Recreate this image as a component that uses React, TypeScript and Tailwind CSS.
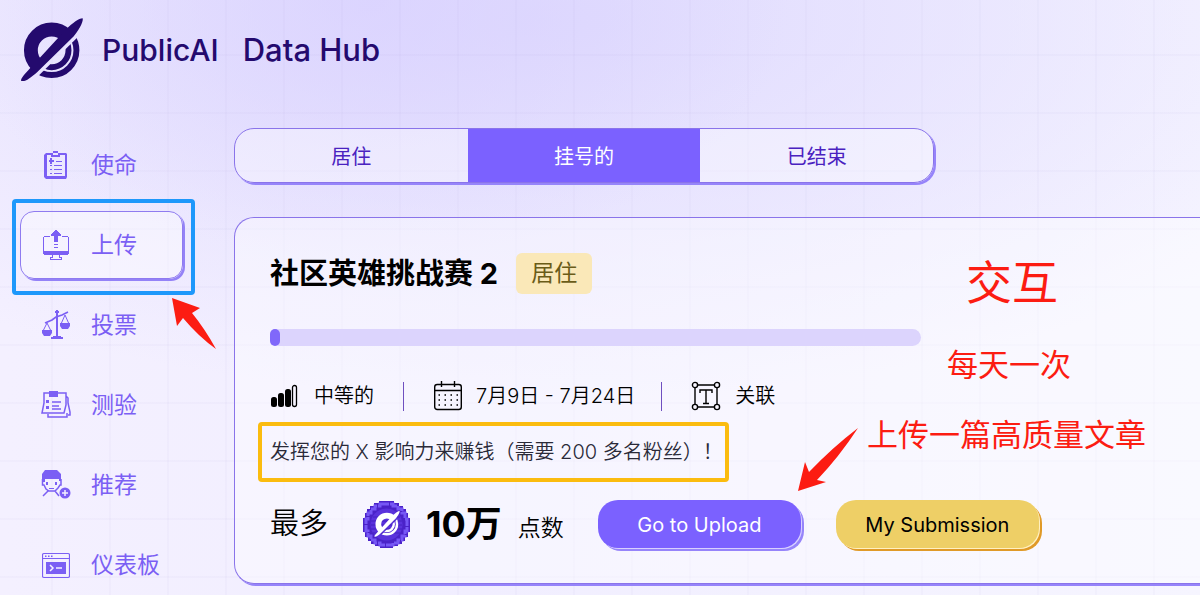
import { useState } from "react";
import type { ReactNode } from "react";

function LogoMark({ className }: { className?: string }) {
  return (
    <svg viewBox="14 8 192 200" className={className} aria-hidden="true">
      <defs>
        <clipPath id="mark-upper">
          <path d="M0 0H206L14 204H0Z" />
        </clipPath>
        <clipPath id="mark-lower">
          <path d="M50 205L196 61L216 61V216H50Z" />
        </clipPath>
      </defs>
      <g fill="none" stroke="currentColor">
        <circle cx="109" cy="109" r="63" strokeWidth="42" clipPath="url(#mark-upper)" />
        <g clipPath="url(#mark-lower)">
          <circle cx="109" cy="109" r="75" strokeWidth="18" />
          <circle cx="109" cy="109" r="51" strokeWidth="18" />
        </g>
      </g>
      <path
        fill="currentColor"
        d="M203 12C191 12 174 25 152 46L60 146C42 166 16 190 16 201C28 206 44 193 64 176L176 66C188 52 206 24 203 12Z"
      />
    </svg>
  );
}

function MissionIcon() {
  return (
    <svg viewBox="0 0 28 30" className="h-[30px] w-7" fill="currentColor">
      <path
        fillRule="evenodd"
        d="M4 3H9V5H5V26H23V5H18V3H24L25 4V27L24 29H4L2 27V5ZM9 3H11V1H16V3H18V7H9ZM11 3V5H16V3Z"
      />
      <path d="M7 10H8V8H10V10H12V12H10V14H8V12H7ZM14 11H20V12H14ZM12 15H20V16H12ZM12 19H20V20H12ZM12 23H20V24H12ZM8 15H10V16H8ZM8 19H10V20H8ZM8 23H10V24H8Z" />
    </svg>
  );
}

function UploadIcon() {
  return (
    <svg viewBox="0 0 28 30" className="h-[30px] w-7" fill="currentColor">
      <path d="M13 0H15V1H16V2H17V3H18V4H19V6H16V12H12V6H9V4H10V3H11V2H12V1H13ZM12 14H16V15H12ZM12 17H16V18H12Z" />
      <path d="M2 6H8V7H2V21H26V7H20V6H26V7H27V24H26V25H2V24H1V7H2ZM10 25H11V28H9V29H19V28H17V25H18V27H20V30H8V27H10Z" />
    </svg>
  );
}

function VoteIcon() {
  return (
    <svg viewBox="0 0 28 30" className="h-[30px] w-7" fill="currentColor">
      <path d="M14 0H16V1H17V3H16V26H19V27H21V29H9V27H11V26H14V3H13V1H14Z" />
      <g fill="none" stroke="currentColor">
        <path strokeWidth="1.600" d="M3 13L10 10L14 7L20 5L26 2" />
        <path d="M5 13L1 21M5 13L9 21M23 5L19 14M23 5L27 14" />
      </g>
      <path d="M0 20H10V23L8 26H2L0 23ZM18 13H28V16L26 19H20L18 16Z" />
    </svg>
  );
}

function QuizIcon() {
  return (
    <svg viewBox="0 0 30 30" className="h-[30px] w-[30px]" fill="currentColor">
      <path d="M8 1H17V7H8Z" />
      <g fill="none" stroke="currentColor" strokeWidth="1.500">
        <path d="M8 3H3V13L1 23H23L25 15V3H17M25 6L27 8V13L29 22V25H27M7 24V27H26V23" />
        <path d="M11 12H20M11 16H18M11 19H20" />
      </g>
      <path d="M5 10H8V13H5ZM5 16H8V19H5Z" />
    </svg>
  );
}

function ReferIcon() {
  return (
    <svg viewBox="0 0 30 30" className="h-[30px] w-[30px]" fill="currentColor">
      <path d="M4 0H16L20 4V11H18V9H4V12H1V4Z" />
      <g fill="none" stroke="currentColor" strokeWidth="1.500">
        <path d="M1.500 9V15H3L5 19L8 21H14L17 18L19 15H20V9M7 21L2 26M14 21L18 26" />
      </g>
      <path d="M5 12H7V15H5ZM14 12H16V15H14ZM8 18H13V19H8Z" />
      <circle cx="24" cy="23" r="5.500" />
      <path d="M24 20V26M21 23H27" stroke="#f4f1ff" strokeWidth="1.500" />
    </svg>
  );
}

function DashboardIcon() {
  return (
    <svg viewBox="0 0 28 30" className="h-[30px] w-7" fill="currentColor">
      <rect x="0.500" y="3.500" width="27" height="24" rx="1.500" fill="none" stroke="currentColor" strokeWidth="1.200" />
      <path d="M1 8H27V9H1ZM3 5.500H4.500V7H3ZM6 5.500H7.500V7H6ZM9 5.500H10.500V7H9ZM4 12H24V24H4Z" />
      <path d="M8 15L11 18L8 21M14 18H20" fill="none" stroke="#f4f1ff" strokeWidth="1.500" />
    </svg>
  );
}

function LevelIcon() {
  return (
    <svg viewBox="0 0 28 24" className="h-6 w-7">
      <rect x="1" y="13" width="6" height="10" rx="2.500" />
      <rect x="8" y="9" width="6" height="14" rx="2.500" />
      <rect x="15" y="5" width="6" height="18" rx="2.500" />
      <rect x="22.500" y="1.500" width="4" height="21" rx="2" fill="none" stroke="currentColor" strokeWidth="1.300" />
    </svg>
  );
}

function CalendarIcon() {
  return (
    <svg viewBox="0 0 28 30" className="h-[30px] w-7" fill="none" stroke="currentColor">
      <rect x="0.700" y="3.500" width="26.600" height="25" rx="2.500" strokeWidth="1.400" />
      <path strokeWidth="1.400" d="M1 9.500H27M7.500 0V6M20.500 0V6" />
      <path strokeWidth="1.500" strokeDasharray="1.500 4.500" d="M4.500 14H24M4.500 19H24M4.500 24H24" />
    </svg>
  );
}

function TextBoxIcon() {
  return (
    <svg viewBox="0 0 30 30" className="h-[30px] w-[30px]" fill="none" stroke="currentColor" strokeWidth="1.400">
      <path d="M7 4H23M7 26H23M4 7V23M26 7V23" />
      <circle cx="4" cy="4" r="2.600" />
      <circle cx="26" cy="4" r="2.600" />
      <circle cx="4" cy="26" r="2.600" />
      <circle cx="26" cy="26" r="2.600" />
      <path d="M9 12V9H21V12M15 9V22M12 22.500H18" />
    </svg>
  );
}

function Coin() {
  return (
    <div className="relative flex size-[47px] items-center justify-center text-white">
      <svg viewBox="0 0 47 47" className="absolute inset-0" aria-hidden="true">
        <path
          fill="#4a22c8"
          d="M16 0H31V2H36V5H40V8H43V12H45V17H47V31H45V36H42V40H39V43H35V45H30V47H17V45H12V43H8V40H5V36H2V31H0V17H2V12H4V8H7V5H11V2H16Z"
        />
        <path
          fill="none"
          stroke="#7657f5"
          strokeWidth="3"
          strokeDasharray="9 1"
          d="M17 3H30V5H35V8H39V12H42V18H44V30H42V35H39V39H35V42H30V44H17V42H12V39H8V35H5V30H3V18H5V12H8V8H12V5H17Z"
        />
        <circle cx="23.500" cy="23.500" r="16" fill="#5a32dc" />
        <path stroke="#4520c0" d="M10 16H37M8 20H39M8 24H39M8 28H39M10 32H37" />
      </svg>
      <LogoMark className="relative h-7 w-[26px]" />
    </div>
  );
}

const NAV: { label: string; icon: ReactNode }[] = [
  { label: "使命", icon: <MissionIcon /> },
  { label: "上传", icon: <UploadIcon /> },
  { label: "投票", icon: <VoteIcon /> },
  { label: "测验", icon: <QuizIcon /> },
  { label: "推荐", icon: <ReferIcon /> },
  { label: "仪表板", icon: <DashboardIcon /> },
];

const TABS = ["居住", "挂号的", "已结束"];

function Sidebar() {
  return (
    <nav className="w-[234px] shrink-0 pl-5 pt-[31px]">
      <ul className="flex flex-col gap-3">
        {NAV.map(({ label, icon }) => {
          const active = label === "上传";
          return (
            <li key={label} className="relative w-[163px]">
              <a
                href="#"
                className={`flex h-[68px] items-center rounded-[14px] border pl-5 text-[23px] text-[#7b5ff4] ${
                  active
                    ? "border-[#8f7bf0] bg-white/40 shadow-[2px_2px_0_#9482f7]"
                    : "border-transparent"
                }`}
              >
                <span className="flex w-[30px] justify-center">{icon}</span>
                <span className="ml-5 whitespace-nowrap">{label}</span>
              </a>
              {active && (
                <div className="pointer-events-none absolute -top-3 -right-3 -bottom-4 -left-2 rounded-sm border-4 border-[#1e98fb]" />
              )}
            </li>
          );
        })}
      </ul>
    </nav>
  );
}

function Tabs() {
  const [tab, setTab] = useState("挂号的");
  return (
    <div className="flex h-[55px] max-w-[700px] overflow-hidden rounded-[20px] border border-[#8a74ea] bg-white/35 shadow-[2px_2px_0_#9684fa]">
      {TABS.map((t) => (
        <button
          key={t}
          type="button"
          onClick={() => setTab(t)}
          className={`flex-1 pt-0.5 text-xl ${
            t === tab ? "bg-[#7b61ff] text-white" : "text-[#4a22c0]"
          }`}
        >
          {t}
        </button>
      ))}
    </div>
  );
}

function Divider() {
  return <div className="h-[29px] w-px bg-[#6f4fc0]" />;
}

function ChallengeCard() {
  return (
    <section className="mt-[34px] h-[367px] rounded-l-[20px] border border-r-0 border-[#8a74ea] bg-white/40 pl-[35px] pt-[35px] shadow-[2px_2px_0_#9684fa]">
      <div className="flex items-center gap-[18px]">
        <h1 className="text-[29px] leading-10 font-bold text-black">社区英雄挑战赛 2</h1>
        <span className="flex h-[41px] items-center rounded-md bg-[#fae8b8] px-[15px] text-[23px] text-[#6a5c18]">
          居住
        </span>
      </div>

      <div className="mt-[35px] h-[17px] max-w-[651px] rounded-full bg-[#dcd4fd]">
        <div className="h-full w-[10px] rounded-full bg-[#8068fa]" />
      </div>

      <div className="mt-[34px] flex h-8 items-center text-xl font-[350] text-black">
        <LevelIcon />
        <span className="ml-4">中等的</span>
        <div className="ml-[29px]">
          <Divider />
        </div>
        <div className="ml-[30px]">
          <CalendarIcon />
        </div>
        <span className="ml-[14px]">7月9日 - 7月24日</span>
        <div className="ml-[26px]">
          <Divider />
        </div>
        <div className="ml-[29px]">
          <TextBoxIcon />
        </div>
        <span className="ml-[14px]">关联</span>
      </div>

      <div className="relative mt-[25px] w-fit">
        <p className="text-xl leading-[30px] font-[350] text-[#2a2a38]">
          发挥您的 X 影响力来赚钱（需要 200 多名粉丝）！
        </p>
        <div className="pointer-events-none absolute -inset-y-[15px] right-[-6px] -left-3 rounded-sm border-4 border-[#fbbc0f]" />
      </div>

      <div className="mt-8 flex h-[50px] items-center text-black">
        <span className="text-[29px] font-[350]">最多</span>
        <div className="ml-[35px]">
          <Coin />
        </div>
        <strong className="ml-4 text-[36px] leading-none font-bold">10万</strong>
        <span className="ml-4 pt-2 text-[23px] font-[350]">点数</span>
        <button
          type="button"
          className="ml-[34px] h-12 w-[203px] rounded-[20px] bg-[#7b61ff] pt-0.5 text-xl text-white shadow-[1px_1px_0_#d8d0ff,3px_3px_0_#9684fa]"
        >
          Go to Upload
        </button>
        <button
          type="button"
          className="ml-[35px] h-12 w-[203px] rounded-[20px] bg-[#eecf66] pt-0.5 text-xl text-black shadow-[1px_1px_0_#fff0c0,3px_3px_0_#e09a28]"
        >
          My Submission
        </button>
      </div>
    </section>
  );
}

// Tutorial marks drawn over the page
function Annotations() {
  return (
    <div className="pointer-events-none absolute inset-0 text-[#fc1c12]">
      <p className="absolute top-[252px] left-[966px] text-[46px] leading-[60px]">交互</p>
      <p className="absolute top-[345px] left-[947px] text-[31px] leading-10">每天一次</p>
      <p className="absolute top-[415px] left-[867px] text-[31px] leading-10 whitespace-nowrap">
        上传一篇高质量文章
      </p>
      <svg viewBox="0 0 46 53" className="absolute top-[297px] left-[171px] h-[53px] w-[46px]">
        <path fill="#fc1c12" d="M1 1L29 11L21 16Q34 32 45 52Q28 40 12 21L6 29Z" />
      </svg>
      <svg viewBox="0 0 62 65" className="absolute top-[427px] left-[797px] h-[65px] w-[62px]">
        <path fill="#fc1c12" d="M1 64L8 35L12 45Q36 20 61 1Q42 30 20 53L29 55Z" />
      </svg>
    </div>
  );
}

export default function App() {
  return (
    <div className="relative min-h-screen overflow-hidden bg-[#f4f1ff] bg-[linear-gradient(#5040a006_2px,transparent_2px),linear-gradient(90deg,#5040a006_2px,transparent_2px),radial-gradient(ellipse_420px_260px_at_370px_0px,#d8d0ffb0,#d8d0ff00),radial-gradient(ellipse_900px_380px_at_540px_20px,#e0dbfe,#e0dbfe00),linear-gradient(90deg,#f4f0ff,#f1eeff_40%,#f6f5ff)] bg-[size:58px_58px,58px_58px,100%_100%,100%_100%,100%_100%] bg-[position:0_54px,51px_0,0_0,0_0,0_0] font-[Inter,'Noto_Sans_CJK_SC',sans-serif]">
      <header className="flex h-[100px] items-center pl-5 text-[#240a6e]">
        <LogoMark className="h-[66px] w-[64px]" />
        <span className="ml-[18px] text-[30px] font-medium">PublicAI</span>
        <span className="ml-6 text-[31px] font-medium">Data Hub</span>
      </header>
      <div className="flex">
        <Sidebar />
        <main className="min-w-0 flex-1 pt-7 pb-2">
          <Tabs />
          <ChallengeCard />
        </main>
      </div>
      <Annotations />
    </div>
  );
}
